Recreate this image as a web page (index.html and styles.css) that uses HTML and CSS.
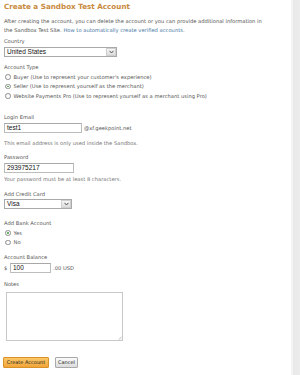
FILE: index.html
```html
<!DOCTYPE html>
<html>
<head>
<meta charset="utf-8">
<link rel="stylesheet" href="styles.css">
</head>
<body>
<div class="layout">
  <main class="page">
    <h1 class="title">Create a Sandbox Test Account</h1>
    <div class="intro">
      <div class="intro-line">After creating the account, you can delete the account or you can provide additional information in</div>
      <div class="intro-line"><span>the Sandbox Test Site.</span> <a class="link" href="#">How to automatically create verified accounts.</a></div>
    </div>

    <div class="label l-country">Country</div>
    <div class="select sel-country"><span class="sel-text">United States</span><span class="sel-btn"><svg width="5" height="4" viewBox="0 0 5 4"><path d="M0.5 0.8 L2.5 3 L4.5 0.8" fill="none" stroke="#555" stroke-width="1"/></svg></span></div>

    <div class="label l-type">Account Type</div>
    <div class="radios">
      <div class="radio-row"><span class="radio"></span>Buyer (Use to represent your customer's experience)</div>
      <div class="radio-row"><span class="radio on"></span>Seller (Use to represent yourself as the merchant)</div>
      <div class="radio-row"><span class="radio"></span>Website Payments Pro (Use to represent yourself as a merchant using Pro)</div>
    </div>

    <div class="label l-email">Login Email</div>
    <div class="inline">
      <div class="input in-email">test1</div>
      <span class="suffix">@xf.geekpoint.net</span>
    </div>
    <div class="help h-email">This email address is only used inside the Sandbox.</div>

    <div class="label l-pass">Password</div>
    <div class="input in-pass">293975217</div>
    <div class="help h-pass">Your password must be at least 8 characters.</div>

    <div class="label l-card">Add Credit Card</div>
    <div class="select sel-card"><span class="sel-text">Visa</span><span class="sel-btn"><svg width="5" height="4" viewBox="0 0 5 4"><path d="M0.5 0.8 L2.5 3 L4.5 0.8" fill="none" stroke="#555" stroke-width="1"/></svg></span></div>

    <div class="label l-bank">Add Bank Account</div>
    <div class="radios">
      <div class="radio-row"><span class="radio on"></span>Yes</div>
      <div class="radio-row"><span class="radio"></span>No</div>
    </div>

    <div class="label l-bal">Account Balance</div>
    <div class="inline">
      <span class="dollar">$</span>
      <div class="input in-bal">100</div>
      <span class="suffix">.00 USD</span>
    </div>

    <div class="label l-notes">Notes</div>
    <div class="textarea"><svg class="grip" width="4" height="4" viewBox="0 0 4 4"><path d="M0.5 3.5 L3.5 0.5 M2 3.5 L3.5 2" stroke="#bbb" stroke-width="0.7"/></svg></div>

    <div class="buttons">
      <button class="btn btn-primary">Create Account</button>
      <button class="btn btn-cancel">Cancel</button>
    </div>
  </main>
  <div class="scroll-strip"></div>
</div>
</body>
</html>
```
FILE: styles.css
```css
html, body {
  margin: 0;
  padding: 0;
  background: #fff;
}
body {
  font-family: "DejaVu Sans", Verdana, sans-serif;
  color: #555;
  font-size: 5.2px;
}
.layout {
  display: flex;
  width: 300px;
  height: 375px;
  overflow: hidden;
}
.page {
  flex: 1;
  padding: 2px 0 0 4px;
}
.scroll-strip {
  width: 9px;
  background: linear-gradient(to right, #f4f4f4 0, #f4f4f4 2px, #e9e9e9 2px, #ececec 100%);
}
.title {
  margin: 0;
  font-size: 7.2px;
  line-height: 10px;
  font-weight: bold;
  color: #c88a3e;
}
.intro {
  margin: 4.5px 0 0;
  color: #555;
}
.intro-line {
  line-height: 9.5px;
  white-space: nowrap;
}
.link {
  color: #4a78a6;
  text-decoration: none;
}
.label {
  line-height: 10px;
  color: #555;
}
.l-country { margin-top: 0.5px; }
.l-type { margin-top: 5.5px; }
.l-email { margin-top: 11.5px; }
.l-pass { margin-top: 4px; }
.l-card { margin-top: 5px; }
.l-bank { margin-top: 9px; }
.l-bal { margin-top: 5px; }
.l-notes { margin-top: 6px; }

.select {
  display: flex;
  align-items: center;
  box-sizing: border-box;
  height: 10px;
  border: 1px solid #a9a9a9;
  background: #fff;
  margin-top: 0.5px;
}
.sel-country { width: 113px; }
.sel-card { width: 68px; margin-top: 0; }
.sel-text {
  flex: 1;
  font-family: "Liberation Sans", Arial, sans-serif;
  font-size: 6.5px;
  color: #111;
  padding-left: 2px;
  line-height: 8px;
}
.sel-btn {
  width: 10px;
  height: 8px;
  box-sizing: border-box;
  border: 1px solid #cfcfcf;
  background: linear-gradient(#f6f6f6, #dcdcdc);
  display: flex;
  align-items: center;
  justify-content: center;
}
.radios {
  display: flex;
  flex-direction: column;
}
.radio-row {
  display: flex;
  align-items: center;
  height: 9.5px;
  padding-left: 1px;
  gap: 3px;
  color: #555;
}
.radio {
  width: 5.5px;
  height: 5.5px;
  box-sizing: border-box;
  border: 0.8px solid #8f8f8f;
  border-radius: 50%;
  background: radial-gradient(circle at 60% 60%, #fff 0, #f0f0f0 100%);
  position: relative;
}
.radio.on::after {
  content: "";
  position: absolute;
  left: 1.1px;
  top: 1.1px;
  width: 1.8px;
  height: 1.8px;
  border-radius: 50%;
  background: #3f9e3f;
}
.inline {
  display: flex;
  align-items: center;
  margin-top: 1px;
}
.input {
  box-sizing: border-box;
  height: 10px;
  border: 1px solid #bdbdbd;
  border-top-color: #a8a8a8;
  background: #fff;
  font-family: "Liberation Sans", Arial, sans-serif;
  font-size: 6.5px;
  line-height: 8px;
  color: #111;
  padding-left: 2px;
}
.in-email { width: 78px; }
.in-pass { width: 70px; margin-top: 1px; }
.in-bal { width: 41px; }
.suffix {
  margin-left: 2px;
  color: #555;
}
.dollar {
  width: 6px;
  color: #555;
}
.help {
  line-height: 10px;
  color: #777;
}
.h-email { margin-top: 5px; }
.h-pass { margin-top: 1px; }
.textarea {
  position: relative;
  box-sizing: border-box;
  width: 117px;
  height: 49px;
  margin: 3px 0 0 2px;
  border: 1px solid #c8c8c8;
  background: #fff;
}
.grip {
  position: absolute;
  right: 0;
  bottom: 0;
}
.buttons {
  display: flex;
  gap: 6px;
  margin-top: 16px;
  margin-left: -1px;
}
.btn {
  box-sizing: border-box;
  height: 11px;
  padding: 0 2px;
  font-family: "DejaVu Sans", Verdana, sans-serif;
  font-size: 5px;
  line-height: 9px;
  color: #222;
  border-radius: 1px;
}
.btn-primary {
  width: 46px;
  border: 1px solid #d9922a;
  background: linear-gradient(#fbc766, #f1a53a);
}
.btn-cancel {
  width: 23px;
  border: 1px solid #a9a9a9;
  background: linear-gradient(#fbfbfb, #dcdcdc);
}
```
